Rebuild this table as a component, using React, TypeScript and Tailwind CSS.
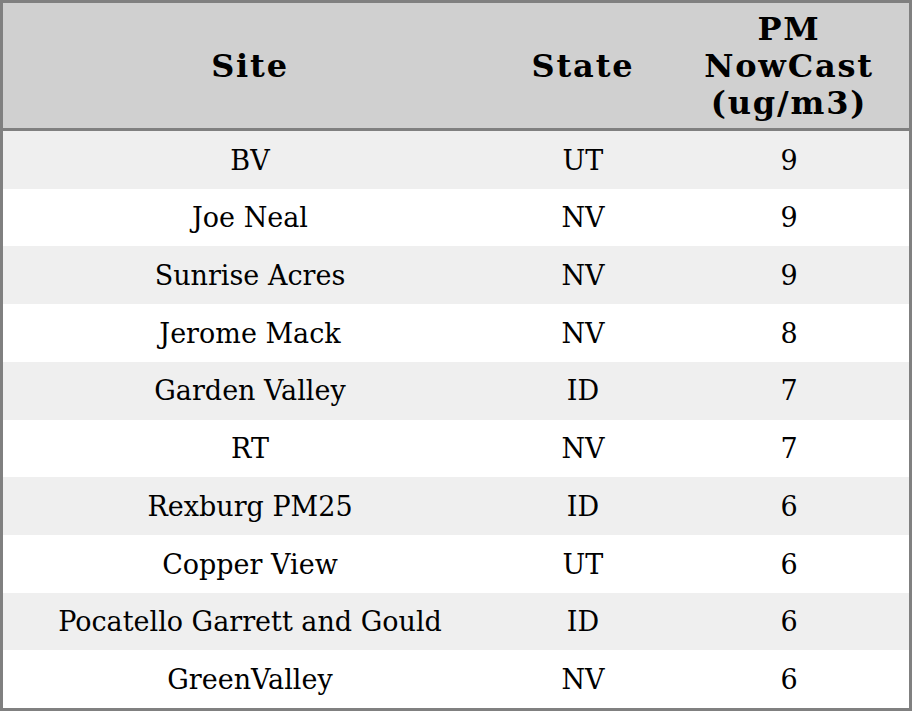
import React from "react";

const rows: [string, string, string][] = [
  ["BV", "UT", "9"],
  ["Joe Neal", "NV", "9"],
  ["Sunrise Acres", "NV", "9"],
  ["Jerome Mack", "NV", "8"],
  ["Garden Valley", "ID", "7"],
  ["RT", "NV", "7"],
  ["Rexburg PM25", "ID", "6"],
  ["Copper View", "UT", "6"],
  ["Pocatello Garrett and Gould", "ID", "6"],
  ["GreenValley", "NV", "6"],
];

export default function App() {
  return (
    <div
      className="w-[912px] h-[711px] bg-white text-black flex flex-col border-[3px] border-[#808080]"
      style={{ fontFamily: '"DejaVu Serif", serif' }}
    >
      <div className="h-[128px] shrink-0 flex bg-[#d0d0d0] border-b-[3px] border-[#808080] font-bold text-[32px] leading-[37px] tracking-[1.8px] pt-[2px]">
        <div className="w-[494px] flex items-center justify-center text-center">Site</div>
        <div className="w-[172px] flex items-center justify-center text-center">State</div>
        <div className="flex-1 flex items-center justify-center text-center">
          PM
          <br />
          NowCast
          <br />
          (ug/m3)
        </div>
      </div>
      <div className="flex-1 flex flex-col text-[27px]">
        {rows.map((r, i) => (
          <div
            key={i}
            className={
              "flex-1 flex items-center pt-[2px] " + (i % 2 === 0 ? "bg-[#efefef]" : "bg-white")
            }
          >
            <div className="w-[494px] text-center">{r[0]}</div>
            <div className="w-[172px] text-center">{r[1]}</div>
            <div className="flex-1 text-center">{r[2]}</div>
          </div>
        ))}
      </div>
    </div>
  );
}
